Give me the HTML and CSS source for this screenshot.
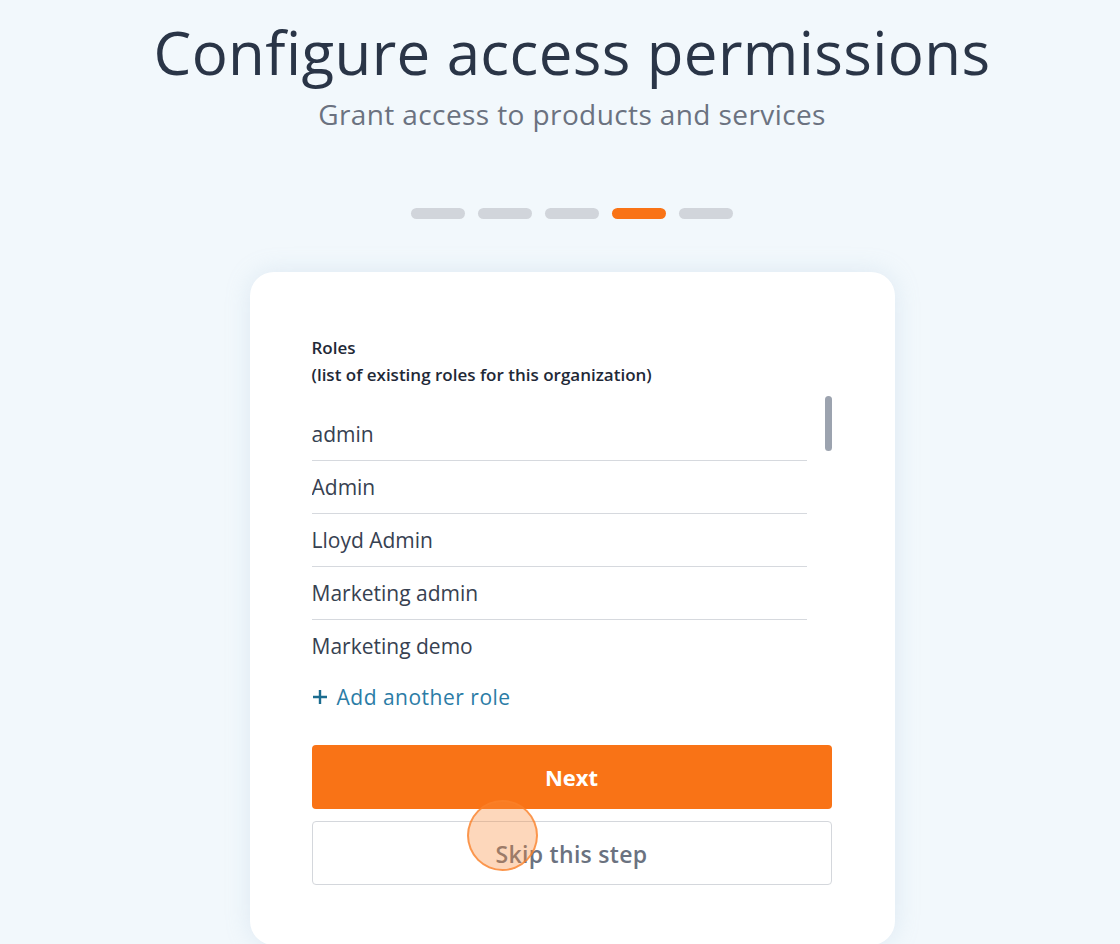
FILE: index.html
```html
<!DOCTYPE html>
<html lang="en">
<head>
    <meta charset="UTF-8">
    <meta name="viewport" content="width=device-width, initial-scale=1.0">
    <title>Configure access permissions</title>
    <link rel="stylesheet" href="styles.css">
</head>
<body>
    <div class="page">
        <h1 class="title">Configure access permissions</h1>
        <p class="subtitle">Grant access to products and services</p>

        <div class="steps">
            <span class="step"></span>
            <span class="step"></span>
            <span class="step"></span>
            <span class="step active"></span>
            <span class="step"></span>
        </div>

        <div class="card">
            <div class="roles-label">
                Roles<br>
                (list of existing roles for this organization)
            </div>

            <div class="roles-box">
                <ul class="role-list">
                    <li>admin</li>
                    <li>Admin</li>
                    <li>Lloyd Admin</li>
                    <li>Marketing admin</li>
                    <li>Marketing demo</li>
                </ul>
                <div class="scroll-track">
                    <div class="scroll-thumb"></div>
                </div>
            </div>

            <a href="#" class="add-role">
                <svg width="16" height="16" viewBox="0 0 16 16">
                    <path d="M8 1v14M1 8h14" stroke="#1b6c8f" stroke-width="2.4" fill="none"/>
                </svg>
                Add another role
            </a>

            <button class="btn btn-next">Next</button>
            <div class="skip-wrap">
                <button class="btn btn-skip">Skip this step</button>
                <span class="click-dot"></span>
            </div>
        </div>
    </div>
</body>
</html>
```

FILE: styles.css
```css
body {
    margin: 0;
    font-family: "Open Sans", "Noto Sans", sans-serif;
    background: #f2f8fc;
    color: #2a3547;
    height: 944px;
    overflow: hidden;
}
.page {
    display: flex;
    flex-direction: column;
    align-items: center;
    padding-left: 24px;
}
.title {
    margin: 17px 0 0;
    font-size: 60px;
    font-weight: 500;
    line-height: 70px;
    letter-spacing: 0.4px;
    color: #2a3547;
}
.subtitle {
    margin: 9px 0 0;
    font-size: 28px;
    line-height: 36px;
    letter-spacing: 0.4px;
    color: #6b7280;
}
.steps {
    display: flex;
    gap: 13px;
    margin-top: 76px;
}
.step {
    width: 54px;
    height: 11px;
    border-radius: 6px;
    background: #d1d5db;
}
.step.active {
    background: #f97316;
}
.card {
    margin-top: 53px;
    width: 645px;
    box-sizing: border-box;
    padding: 62px 63px 60px 62px;
    background: #fff;
    border-radius: 24px;
    box-shadow: 0 0 24px rgba(160, 190, 215, 0.25);
}
.roles-label {
    font-size: 17px;
    font-weight: 600;
    line-height: 27px;
    color: #1f2937;
}
.roles-box {
    display: flex;
    margin-top: 8px;
    height: 271px;
    overflow: hidden;
}
.role-list {
    list-style: none;
    margin: 12px 0 0;
    padding: 0;
    width: 495px;
}
.role-list li {
    height: 52px;
    line-height: 52px;
    font-size: 21px;
    color: #374151;
    border-bottom: 1.5px solid #d6d9de;
}
.role-list li:last-child {
    border-bottom: none;
}
.scroll-track {
    margin-left: auto;
    width: 7px;
}
.scroll-thumb {
    height: 55px;
    border-radius: 4px;
    background: #9ca3af;
}
.add-role {
    display: flex;
    align-items: center;
    gap: 9px;
    margin-top: 16px;
    font-size: 21px;
    letter-spacing: 0.5px;
    color: #2b7ca6;
    text-decoration: none;
}
.btn {
    display: block;
    width: 100%;
    height: 64px;
    border-radius: 4px;
    font-family: inherit;
    font-size: 22px;
    cursor: pointer;
}
.btn-next {
    margin-top: 34px;
    border: none;
    background: #f97316;
    color: #fff;
    font-weight: 700;
}
.skip-wrap {
    position: relative;
    margin-top: 12px;
}
.btn-skip {
    border: 1.5px solid #d4d7dc;
    background: #fff;
    color: #6b7280;
    font-size: 23px;
    font-weight: 600;
    letter-spacing: 0.3px;
    padding-top: 2px;
}
.click-dot {
    position: absolute;
    left: 155px;
    top: -21px;
    width: 67px;
    height: 67px;
    border-radius: 50%;
    border: 2px solid rgba(249, 128, 40, 0.75);
    background: rgba(249, 140, 60, 0.35);
    pointer-events: none;
}
```
